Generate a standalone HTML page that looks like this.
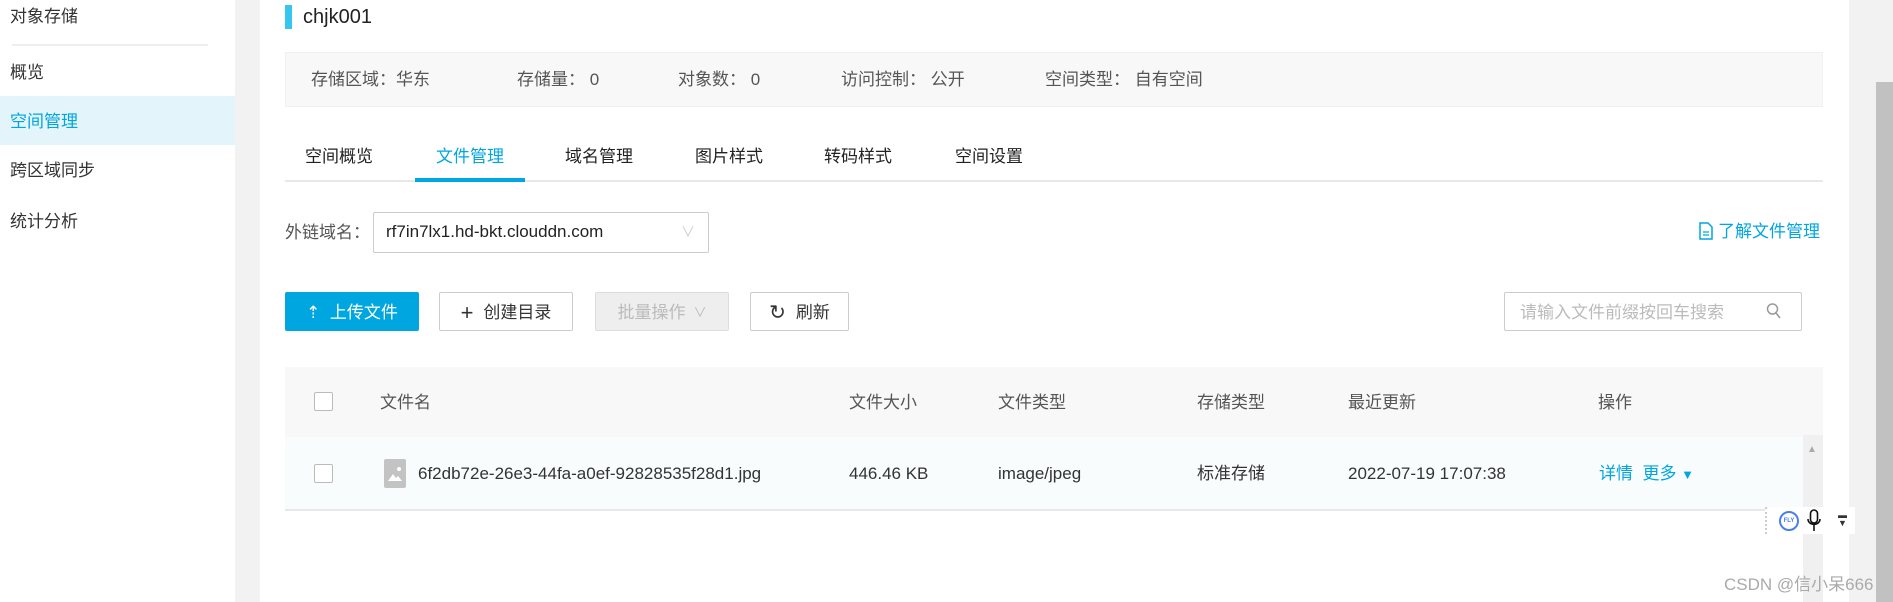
<!DOCTYPE html>
<html><head><meta charset="utf-8"><style>
*{margin:0;padding:0;box-sizing:border-box}
body{width:1893px;height:602px;overflow:hidden;background:#f2f2f2;font-family:"Liberation Sans","Noto Sans CJK SC",sans-serif;font-size:17px;color:#333;position:relative}
.a{position:absolute;white-space:nowrap;line-height:20px}
.side{position:absolute;left:0;top:0;width:235px;height:602px;background:#fff}
.main{position:absolute;left:260px;top:0;width:1589px;height:602px;background:#fff}
.btn{position:absolute;top:292px;height:39px;border:1px solid #ccc;border-radius:2px;background:#fff;display:flex;align-items:center;justify-content:center;font-size:17px;color:#333;line-height:20px;padding-top:2px}
.cb{position:absolute;width:19px;height:19px;border:1px solid #bbb;border-radius:2px;background:#fff}
</style></head><body>
<div class="side">
<div class="a" style="left:10px;top:7px;">对象存储</div>
<div class="a" style="left:12px;top:44px;width:196px;height:2px;background:#eee"></div>
<div class="a" style="left:10px;top:63px;">概览</div>
<div class="a" style="left:0;top:96px;width:235px;height:49px;background:#e3f4fb"></div>
<div class="a" style="left:10px;top:112px;color:#00a6e0">空间管理</div>
<div class="a" style="left:10px;top:161px;">跨区域同步</div>
<div class="a" style="left:10px;top:212px;">统计分析</div>
</div>
<div class="main"></div>
<div class="a" style="left:1876px;top:82px;width:17px;height:520px;background:#c1c1c1"></div>
<div class="a" style="left:285px;top:5px;width:7px;height:24px;background:#35c6ef"></div>
<div class="a" style="left:303px;top:6px;font-size:20px;line-height:22px;color:#222">chjk001</div>
<div class="a" style="left:285px;top:52px;width:1538px;height:55px;background:#f8f8f8;border:1px solid #f0f0f0"></div>
<div class="a" style="top:70px;left:311px;color:#555">存储区域：华东</div>
<div class="a" style="top:70px;left:517px;color:#555">存储量：&nbsp;0</div>
<div class="a" style="top:70px;left:678px;color:#555">对象数：&nbsp;0</div>
<div class="a" style="top:70px;left:841px;color:#555">访问控制：&nbsp;公开</div>
<div class="a" style="top:70px;left:1045px;color:#555">空间类型：&nbsp;自有空间</div>
<div class="a" style="top:147px;left:305px;color:#222">空间概览</div>
<div class="a" style="top:147px;left:436px;color:#00a6e0">文件管理</div>
<div class="a" style="top:147px;left:565px;color:#222">域名管理</div>
<div class="a" style="top:147px;left:695px;color:#222">图片样式</div>
<div class="a" style="top:147px;left:824px;color:#222">转码样式</div>
<div class="a" style="top:147px;left:955px;color:#222">空间设置</div>
<div class="a" style="left:285px;top:180px;width:1538px;height:2px;background:#e8e8e8"></div>
<div class="a" style="left:415px;top:178px;width:110px;height:4px;background:#00a6e0"></div>
<div class="a" style="left:285px;top:223px;color:#555">外链域名：</div>
<div class="a" style="left:373px;top:212px;width:336px;height:41px;border:1px solid #ccc;border-radius:2px"></div>
<div class="a" style="left:386px;top:222px;color:#222">rf7in7lx1.hd-bkt.clouddn.com</div>
<div class="a" style="left:681px;top:222px;color:#ccc;font-size:14px">∨</div>
<svg class="a" style="left:1699px;top:222px" width="14" height="18" viewBox="0 0 14 18"><path d="M1 1h8l4 4v12H1z" fill="none" stroke="#00a6e0" stroke-width="1.5"/><path d="M4 10h6M4 13h6" stroke="#00a6e0" stroke-width="1.3"/></svg>
<div class="a" style="left:1718px;top:222px;color:#00a6e0">了解文件管理</div>
<div class="btn" style="left:285px;width:134px;background:#00a6e0;border-color:#00a6e0;color:#fff">⇡&nbsp; 上传文件</div>
<div class="btn" style="left:439px;width:134px"><span style="font-size:22px;margin-right:10px;font-weight:300">+</span>创建目录</div>
<div class="btn" style="left:595px;width:134px;background:#eee;color:#bbb;border-color:#ddd">批量操作 <span style="font-size:13px;margin-left:8px">∨</span></div>
<div class="btn" style="left:750px;width:99px"><span style="font-size:20px;margin-right:10px">↻</span>刷新</div>
<div class="a" style="left:1504px;top:292px;width:298px;height:39px;border:1px solid #ccc;border-radius:2px"></div>
<div class="a" style="left:1520px;top:303px;color:#bbb">请输入文件前缀按回车搜索</div>
<svg class="a" style="left:1766px;top:302px" width="16" height="18"><circle cx="6.5" cy="7" r="5" fill="none" stroke="#999" stroke-width="1.5"/><path d="M10 11l4 5" stroke="#999" stroke-width="1.5"/></svg>
<div class="a" style="left:285px;top:367px;width:1538px;height:70px;background:#f8f8f8"></div>
<div class="a" style="left:285px;top:437px;width:1518px;height:73px;background:#f8fcfd"></div>
<div class="a" style="left:285px;top:509px;width:1518px;height:2px;background:#e8e8e8"></div>
<div class="a" style="left:1803px;top:435px;width:20px;height:167px;background:#f0f0f0"></div>
<div class="a" style="left:1807px;top:440px;color:#aaa;font-size:10px">▲</div>
<div class="cb" style="left:314px;top:392px"></div>
<div class="cb" style="left:314px;top:464px"></div>
<div class="a" style="top:393px;left:380px;color:#555">文件名</div>
<div class="a" style="top:393px;left:849px;color:#555">文件大小</div>
<div class="a" style="top:393px;left:998px;color:#555">文件类型</div>
<div class="a" style="top:393px;left:1197px;color:#555">存储类型</div>
<div class="a" style="top:393px;left:1348px;color:#555">最近更新</div>
<div class="a" style="top:393px;left:1598px;color:#555">操作</div>
<svg class="a" style="left:384px;top:459px" width="22" height="29"><rect width="22" height="29" rx="2" fill="#c3c3c3"/><path d="M4 22l5-7 3 4 2-2 4 5z" fill="#fff"/><circle cx="15" cy="10" r="2" fill="#fff"/></svg>
<div class="a" style="top:464px;left:418px;color:#333">6f2db72e-26e3-44fa-a0ef-92828535f28d1.jpg</div>
<div class="a" style="top:464px;left:849px;color:#333">446.46 KB</div>
<div class="a" style="top:464px;left:998px;color:#333">image/jpeg</div>
<div class="a" style="top:464px;left:1197px;color:#333">标准存储</div>
<div class="a" style="top:464px;left:1348px;color:#333">2022-07-19 17:07:38</div>
<div class="a" style="top:464px;left:1599px;color:#00a6e0">详情&nbsp; 更多 <span style="font-size:13px">▼</span></div>
<div class="a" style="left:1765px;top:507px;width:90px;height:27px;background:#fff;border-left:2px dotted #ccc"></div>
<div class="a" style="left:1779px;top:511px;width:20px;height:20px;border:2px solid #4a7ef0;border-radius:50%;font-size:6px;color:#4a7ef0;text-align:center;line-height:16px;font-weight:bold">FLY</div>
<svg class="a" style="left:1806px;top:509px" width="16" height="24"><rect x="4.5" y="1" width="7" height="13" rx="3.5" fill="none" stroke="#111" stroke-width="1.6"/><path d="M2 10c0 7 12 7 12 0M8 16v6" fill="none" stroke="#111" stroke-width="1.6"/></svg>
<div class="a" style="left:1838px;top:511px;font-size:9px;line-height:8px">▬<br>▼</div>
<div class="a" style="left:1724px;top:575px;color:#aaa;font-size:17px">CSDN @信小呆666</div>
</body></html>
